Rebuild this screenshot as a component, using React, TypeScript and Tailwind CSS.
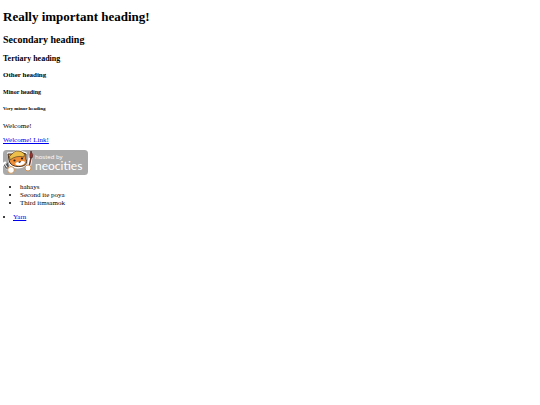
function NeocitiesBadge() {
    return (
        <svg viewBox="0 0 85 25" className="block h-[25px] w-[85px]" role="img" aria-label="Hosted by Neocities">
            <rect width="85" height="25" rx="3.5" fill="#a9a9a9" />

            {/* fork */}
            <path d="M2 14 L8 21" stroke="#fff" strokeWidth="4.6" strokeLinecap="round" />
            <path d="M1.500 15 Q3 19 5 18 Q6 16 4 13 M3 14 L8 21" fill="none" stroke="#4d4d4d" strokeWidth="1.1" strokeLinecap="round" />

            {/* brush */}
            <path d="M26 16 L28 4" stroke="#fff" strokeWidth="4" strokeLinecap="round" />
            <path d="M26 17 L28 8" stroke="#6b3024" strokeWidth="1.5" />
            <path d="M27 8 Q26 4 28 1 Q31 5 29 8 Z" fill="#a3302a" stroke="#3f2320" strokeWidth="0.7" />

            {/* cat head */}
            <path d="M6 9 L5 3 L10 3 Q15 -1 20 2 L23 3 L23 9 Q25 14 19 17 Q11 19 7 14 Z" fill="#fff" stroke="#fff" strokeWidth="1.6" strokeLinejoin="round" />
            <path d="M6 10 L5 4 L10 4 Q15 0 20 3 L23 4 L23 9 Q25 14 20 16 Q11 18 7 13 Z" fill="#ee8f38" stroke="#453020" strokeWidth="1" />
            <path d="M7 10 Q5 6 9 4 Q13 -1 19 2 Q23 4 21 7 Q13 5 7 10 Z" fill="#ecc04a" stroke="#5a4024" strokeWidth="0.7" />
            <path d="M12 14 Q14 11 17 12 Q20 10 22 12 Q22 14 18 15.500 Q14 16 12 14 Z" fill="#fff" />
            <circle cx="11.500" cy="10.500" r="1.1" fill="#2d211c" />
            <circle cx="19" cy="8.500" r="1.1" fill="#2d211c" />
            <path d="M15 12 L18 11 L17 13 Z" fill="#2d211c" />

            {/* paws */}
            <circle cx="8" cy="20" r="3.4" fill="#fff" stroke="#c98a4a" strokeWidth="0.9" />
            <circle cx="25" cy="18" r="3" fill="#fff" stroke="#c98a4a" strokeWidth="0.9" />

            <text x="32" y="9" fill="#fff" fontSize="6" fontFamily="'Open Sans', sans-serif">hosted by</text>
            <text x="32" y="20" fill="#fff" fontSize="12" fontFamily="Lato, sans-serif">neocities</text>
        </svg>
    );
}

export default function App() {
    return (
        <main className="min-h-screen bg-white px-[3px] pt-[9px] font-['Liberation_Serif',serif] text-[7px] leading-[8px] text-black">
            <h1 className="text-[13px] leading-[16px] font-bold">Really important heading!</h1>
            <h2 className="mt-[9px] text-[10px] leading-[12px] font-bold">Secondary heading</h2>
            <h3 className="mt-[8px] text-[8px] leading-[10px] font-bold">Tertiary heading</h3>
            <h4 className="mt-[7px] font-bold">Other heading</h4>
            <h5 className="mt-[9px] text-[6px] font-bold">Minor heading</h5>
            <h6 className="mt-[9px] text-[5px] font-bold">Very minor heading</h6>
            <p className="mt-[9px]">Welcome!</p>
            <p className="mt-[6px]">
                <a href="#" className="text-[#0000ee] underline">Welcome! Link!</a>
            </p>
            <div className="mt-[6px]">
                <NeocitiesBadge />
            </div>
            <ul className="mt-[8px] list-disc pl-[17px]">
                <li>hahays</li>
                <li>Second ite poya</li>
                <li>Third itmsamok</li>
            </ul>
            <ul className="mt-[6px] list-inside list-disc">
                <li>
                    <a href="#" className="text-[#0000ee] underline">Yarn</a>
                </li>
            </ul>
        </main>
    );
}
